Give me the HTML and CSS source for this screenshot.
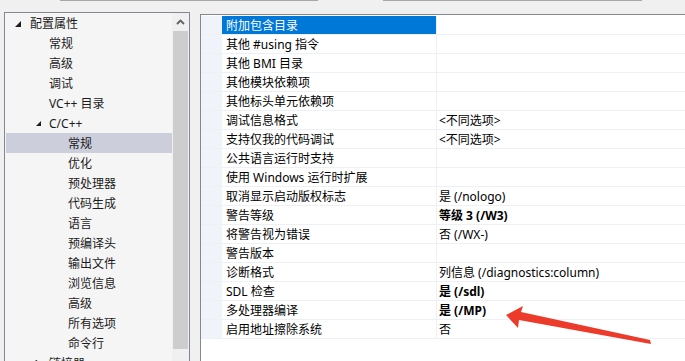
FILE: index.html
```html
<!DOCTYPE html>
<html lang="zh-CN">
<head>
<meta charset="utf-8">
<title>属性页</title>
<link rel="stylesheet" href="styles.css">
</head>
<body>
<div class="topbar"><span class="seg seg-a"></span><span class="seg seg-b"></span></div>
<div class="main">
  <div class="tree-panel">
    <ul class="tree">
      <li class="node l0"><span class="twisty"><svg width="15" height="20" viewBox="0 0 15 20"><polygon points="6,8 6,14 0,14" fill="#1e1e1e"/></svg></span>配置属性</li>
      <li class="node l1">常规</li>
      <li class="node l1">高级</li>
      <li class="node l1">调试</li>
      <li class="node l1">VC++ 目录</li>
      <li class="node l1 parent"><span class="twisty"><svg width="15" height="20" viewBox="0 0 15 20"><polygon points="7,8 7,13 2,13" fill="#1e1e1e"/></svg></span>C/C++</li>
      <li class="node l2 selected">常规</li>
      <li class="node l2">优化</li>
      <li class="node l2">预处理器</li>
      <li class="node l2">代码生成</li>
      <li class="node l2">语言</li>
      <li class="node l2">预编译头</li>
      <li class="node l2">输出文件</li>
      <li class="node l2">浏览信息</li>
      <li class="node l2">高级</li>
      <li class="node l2">所有选项</li>
      <li class="node l2">命令行</li>
      <li class="node l1 parent"><span class="twisty"><svg width="15" height="20" viewBox="0 0 15 20"><polygon points="2,7 6,10.5 2,14" fill="none" stroke="#444" stroke-width="1"/></svg></span>链接器</li>
    </ul>
    <div class="vscroll">
      <div class="vs-arrow"><svg width="17" height="17" viewBox="0 0 17 17"><path d="M5 11 L8.5 7.5 L12 11" fill="none" stroke="#606060" stroke-width="1.8"/></svg></div>
      <div class="vs-thumb"></div>
    </div>
  </div>
  <div class="grid-panel">
    <div class="rows">
      <div class="row selected"><span class="gut"></span><span class="name">附加包含目录</span><span class="val"></span></div>
      <div class="row"><span class="gut"></span><span class="name">其他 #using 指令</span><span class="val"></span></div>
      <div class="row"><span class="gut"></span><span class="name">其他 BMI 目录</span><span class="val"></span></div>
      <div class="row"><span class="gut"></span><span class="name">其他模块依赖项</span><span class="val"></span></div>
      <div class="row"><span class="gut"></span><span class="name">其他标头单元依赖项</span><span class="val"></span></div>
      <div class="row"><span class="gut"></span><span class="name">调试信息格式</span><span class="val">&lt;不同选项&gt;</span></div>
      <div class="row"><span class="gut"></span><span class="name">支持仅我的代码调试</span><span class="val">&lt;不同选项&gt;</span></div>
      <div class="row"><span class="gut"></span><span class="name">公共语言运行时支持</span><span class="val"></span></div>
      <div class="row"><span class="gut"></span><span class="name">使用 Windows 运行时扩展</span><span class="val"></span></div>
      <div class="row"><span class="gut"></span><span class="name">取消显示启动版权标志</span><span class="val">是 (/nologo)</span></div>
      <div class="row"><span class="gut"></span><span class="name">警告等级</span><span class="val bold">等级 3 (/W3)</span></div>
      <div class="row"><span class="gut"></span><span class="name">将警告视为错误</span><span class="val">否 (/WX-)</span></div>
      <div class="row"><span class="gut"></span><span class="name">警告版本</span><span class="val"></span></div>
      <div class="row"><span class="gut"></span><span class="name">诊断格式</span><span class="val">列信息 (/diagnostics:column)</span></div>
      <div class="row"><span class="gut"></span><span class="name">SDL 检查</span><span class="val bold">是 (/sdl)</span></div>
      <div class="row"><span class="gut"></span><span class="name">多处理器编译</span><span class="val bold">是 (/MP)</span></div>
      <div class="row"><span class="gut"></span><span class="name">启用地址擦除系统</span><span class="val">否</span></div>
    </div>
  </div>
</div>
<svg class="annot" width="685" height="361" viewBox="0 0 685 361">
  <polygon points="506,315 523,306 521,312 650,340 651,344 519,320 518,328" fill="#ec3a2b"/>
</svg>
</body>
</html>
```
FILE: styles.css
```css
* { box-sizing: border-box; }
html, body { margin: 0; padding: 0; }
body {
  width: 685px;
  height: 361px;
  overflow: hidden;
  position: relative;
  background: #f0f0f0;
  font-family: "Noto Sans", "Noto Sans CJK SC", sans-serif;
  font-size: 12px;
  color: #1b1b1b;
}
.topbar {
  height: 12px;
  display: flex;
  align-items: flex-start;
}
.seg {
  display: block;
  height: 1px;
  background: #a7a7a7;
}
.seg-a { margin-left: 60px; width: 258px; }
.seg-b { margin-left: 65px; width: 259px; }

.main {
  display: flex;
  align-items: flex-start;
  height: 349px;
  overflow: hidden;
}
.tree-panel {
  margin-left: 4px;
  width: 186px;
  height: 360px;
  border: 1px solid #828790;
  border-bottom: none;
  background: #f5f5f5;
  display: flex;
  flex: none;
}
.tree {
  list-style: none;
  margin: 0;
  padding: 0 0 0 1px;
  flex: 1;
  overflow: hidden;
}
.node {
  height: 20px;
  line-height: 22px;
  display: flex;
  align-items: flex-start;
  white-space: nowrap;
}
.twisty { width: 15px; height: 20px; flex: none; display: block; }
.twisty svg { display: block; }
.l0 { padding-left: 9px; }
.l1 { padding-left: 43px; }
.l1.parent { padding-left: 28px; }
.l2 { padding-left: 62px; }
.node.selected { background: #cccedb; }

.vscroll {
  width: 17px;
  flex: none;
  background: #f0f0f0;
  display: flex;
  flex-direction: column;
}
.vs-arrow { height: 18px; }
.vs-arrow svg { display: block; }
.vs-thumb {
  margin-left: 1px;
  width: 15px;
  height: 318px;
  background: #cdcdcd;
}

.grid-panel {
  margin-left: 10px;
  margin-top: 2px;
  flex: 1;
  height: 360px;
  border-left: 1px solid #828790;
  border-top: 1px solid #828790;
  background: #ffffff;
  padding-top: 1px;
  color: #000;
}
.row {
  display: flex;
  height: 19px;
  border-bottom: 1px solid #eef0f8;
}
.gut {
  width: 21px;
  flex: none;
  background: #f0f4fa;
}
.name {
  width: 215px;
  flex: none;
  padding-left: 4px;
  line-height: 20px;
  white-space: nowrap;
  border-right: 1px solid #eef0f5;
}
.val {
  flex: 1;
  padding-left: 2px;
  line-height: 20px;
  white-space: nowrap;
}
.val.bold { font-weight: bold; }
.row.selected .name { background: #0078d7; color: #ffffff; }

.annot {
  position: absolute;
  left: 0;
  top: 0;
  pointer-events: none;
}
```
